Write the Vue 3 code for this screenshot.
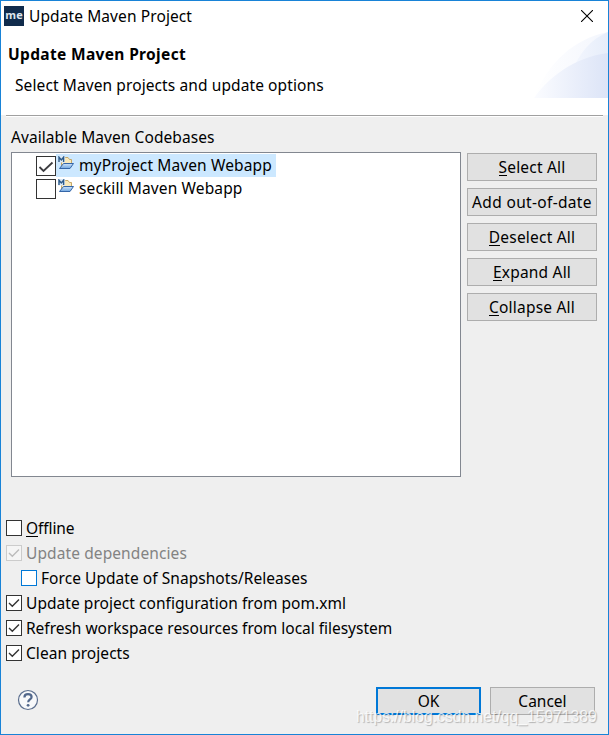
<script setup>
import { ref } from 'vue'

const projects = ref([
  { name: 'myProject Maven Webapp', checked: true, selected: true },
  { name: 'seckill Maven Webapp', checked: false, selected: false },
])
const actions = [
  { key: 'S', rest: 'elect All' },
  { key: '', rest: 'Add out-of-date' },
  { key: 'D', rest: 'eselect All' },
  { key: 'E', rest: 'xpand All' },
  { key: 'C', rest: 'ollapse All' },
]
const options = ref([
  { key: 'O', rest: 'ffline', checked: false, kind: 'offline' },
  { key: '', rest: 'Update dependencies', checked: true, kind: 'disabled' },
  { key: '', rest: 'Force Update of Snapshots/Releases', checked: false, kind: 'nested' },
  { key: '', rest: 'Update project configuration from pom.xml', checked: true, kind: 'config' },
  { key: '', rest: 'Refresh workspace resources from local filesystem', checked: true, kind: 'refresh' },
  { key: '', rest: 'Clean projects', checked: true, kind: 'clean' },
])
</script>

<template>
  <div class="dialog">
    <header class="head">
      <svg class="swoosh" width="74" height="66" viewBox="0 0 74 66">
        <defs>
          <linearGradient id="g1" x1="0" x2="1"><stop offset="0" stop-color="#fff" /><stop offset="1" stop-color="#f3f6fd" /></linearGradient>
          <linearGradient id="g2" x1="0" x2="1"><stop offset="0" stop-color="#f4f7fe" /><stop offset="1" stop-color="#e6edfa" /></linearGradient>
          <linearGradient id="g3" x1="0" x2="1"><stop offset="0" stop-color="#fbfcff" /><stop offset="1" stop-color="#dce4f7" /></linearGradient>
        </defs>
        <path d="M0 66C14 30 40 7 74 0V66Z" fill="url(#g1)" />
        <path d="M37 42C45 21 57 7 74 0V66H37Z" fill="url(#g2)" />
        <path d="M0 66C14 46 40 25 74 21V66Z" fill="url(#g3)" />
      </svg>
      <div class="titlebar">
        <span class="logo">me</span>
        <span class="caption">Update Maven Project</span>
        <svg class="close" width="12" height="12" viewBox="0 0 12 12"><path d="M0 0L12 12M12 0L0 12" stroke="#000" stroke-width="1.1" /></svg>
      </div>
      <h1 class="heading"><span>Update Maven Project</span></h1>
      <p class="sub"><span>Select Maven projects and update options</span></p>
    </header>
    <div class="rule"></div>
    <main class="main">
      <div class="label"><span>Available Maven Codebases</span></div>
      <div class="columns">
        <div class="tree">
          <div v-for="p in projects" :key="p.name" class="row" @click="p.checked = !p.checked">
            <span class="treebox">
              <svg v-if="p.checked" width="18" height="18" viewBox="0 0 18 18"><path d="M2.5 10L6.5 14L15.5 5.5" fill="none" stroke="#3c3c40" stroke-width="1.8" /></svg>
            </span>
            <span class="node" :class="{ selected: p.selected }">
              <svg class="folder" width="17" height="15" viewBox="0 0 17 15">
                <defs><linearGradient id="flap" x2="0" y2="1"><stop offset="0" stop-color="#cfe4fa" /><stop offset="1" stop-color="#6fa6e0" /></linearGradient></defs>
                <path d="M3.5 12V4L7.5 1.5H10L11.5 3.5H13.5V8" fill="#f9e9bb" stroke="#c6a868" />
                <path d="M1.5 12.5L5.5 7.5H15.5L12 12.5Z" fill="url(#flap)" stroke="#3566a8" />
                <path d="M0 0H7V6.5H0Z" fill="#dce9f6" />
                <path d="M1 6V1.2L3.3 4L5.6 1.2V6" fill="none" stroke="#2c5a8a" stroke-width="1.4" />
              </svg>
              <span class="name">{{ p.name }}</span>
            </span>
          </div>
        </div>
        <div class="actions">
          <button v-for="a in actions" :key="a.rest" class="btn" :class="{ wide: !a.key }"><span><u v-if="a.key">{{ a.key }}</u>{{ a.rest }}</span></button>
        </div>
      </div>
      <div class="options">
        <div v-for="o in options" :key="o.kind" class="option" :class="o.kind">
          <span class="box">
            <svg v-if="o.checked" width="14" height="14" viewBox="0 0 14 14"><path d="M2 7L5.3 10.3L12 3.5" fill="none" stroke="currentColor" stroke-width="1.4" /></svg>
          </span>
          <span class="text"><u v-if="o.key">{{ o.key }}</u>{{ o.rest }}</span>
        </div>
      </div>
    </main>
    <footer class="foot">
      <svg class="help" width="22" height="22" viewBox="0 0 22 22">
        <circle cx="11" cy="11" r="9.5" fill="#f7f8fa" stroke="#5b6e8e" stroke-width="1.2" />
        <path d="M7.4 8.5C7.4 6.3 9 5.2 11 5.2C13.2 5.2 14.6 6.3 14.6 8C14.6 10.4 11.2 10.6 11.2 13.2" fill="none" stroke="#52688c" stroke-width="2.2" />
        <circle cx="11.1" cy="16.3" r="1.4" fill="#52688c" />
      </svg>
      <button class="btn ok"><span>OK</span></button>
      <button class="btn cancel"><span>Cancel</span></button>
    </footer>
    <div class="watermark">https://blog.csdn.net/qq_15971389</div>
  </div>
</template>

<style>
body { margin: 0; }
</style>

<style scoped>
* { box-sizing: border-box; }
.dialog {
  position: relative; width: 609px; height: 735px; overflow: hidden;
  display: flex; flex-direction: column;
  border: 1px solid #1883d7; background: #efefef; color: #000;
  font: 15.5px/24px "Noto Sans", "Open Sans", sans-serif; white-space: nowrap;
}
.head { position: relative; height: 114px; background: #fff; flex: none; }
.swoosh { position: absolute; right: 0; top: 31px; }
.titlebar { display: flex; align-items: center; height: 30px; padding: 0 15px 0 3px; }
.logo {
  width: 20px; height: 20px; margin-right: 5px; background: #102b4c; color: #dfe5ee;
  font: 700 11px/17px "Open Sans", sans-serif; text-align: center;
}
.caption { flex: 1; letter-spacing: 0.1px; }
.close { display: block; }
.heading { margin: 11px 0 0 7px; font-size: 15.5px; line-height: 24px; font-weight: 700; letter-spacing: 0.34px; }
.sub { margin: 7px 0 0 14px; letter-spacing: 0.1px; }
.rule { height: 2px; margin: 0 5px; border-top: 1px solid #a0a0a0; background: #fff; flex: none; }
.main { padding: 8px 11px 0 10px; }
.label { height: 27px; line-height: 24px; letter-spacing: 0.07px; }
.columns { display: flex; gap: 6px; }
.tree { width: 450px; height: 325px; border: 1px solid #828790; background: #fff; padding-top: 1px; }
.row { display: flex; align-items: center; height: 23px; padding-left: 24px; }
.treebox { width: 20px; height: 20px; border: 1px solid #333; background: #fff; flex: none; margin-top: 1px; }
.treebox svg, .box svg { display: block; }
.node { display: flex; height: 23px; padding: 0 4px 0 2px; line-height: 22px; letter-spacing: 0.12px; }
.node.selected { background: #cce8ff; }
.folder { display: block; margin: 2px 4px 0 0; }
.actions { display: flex; flex-direction: column; gap: 7px; padding-top: 1px; }
.btn {
  width: 130px; height: 28px; padding: 0; border: 1px solid #adadad; background: #e1e1e1;
  font: inherit; line-height: 26px; color: #000; text-align: center; white-space: nowrap; letter-spacing: 0.2px;
}
.btn.wide { letter-spacing: 0.33px; }
u { text-decoration: none; box-shadow: inset 0 -1px #000; display: inline-block; line-height: 17px; }
.options { margin: 38px 0 0 -5px; }
.option { display: flex; align-items: center; gap: 4px; height: 25px; letter-spacing: 0.05px; }
.option .text { line-height: 25px; margin-top: 1px; }
.box { width: 16px; height: 16px; margin-top: 1px; border: 1px solid #333; background: #fff; color: #333; flex: none; }
.offline { letter-spacing: -0.1px; }
.refresh { letter-spacing: -0.02px; }
.disabled { color: #838383; letter-spacing: 0.1px; }
.disabled .box { border-color: #ccc; color: #bcbcbc; background: #f5f5f5; }
.nested { padding-left: 15px; }
.nested .box { border-color: #0078d7; }
.foot { display: flex; align-items: flex-start; margin-top: 22px; padding: 0 13px 0 16px; }
.help { margin: 2px auto 0 0; }
.foot .btn { width: 105px; letter-spacing: 0; }
.foot .ok { border: 2px solid #0078d7; line-height: 24px; margin-right: 9px; }
.watermark {
  position: absolute; left: 355px; top: 704px; font: 15.7px/24px "Liberation Sans", sans-serif;
  color: rgba(255, 255, 255, .8); text-shadow: 1px 1px 1px rgba(0, 0, 0, .25);
}
</style>
